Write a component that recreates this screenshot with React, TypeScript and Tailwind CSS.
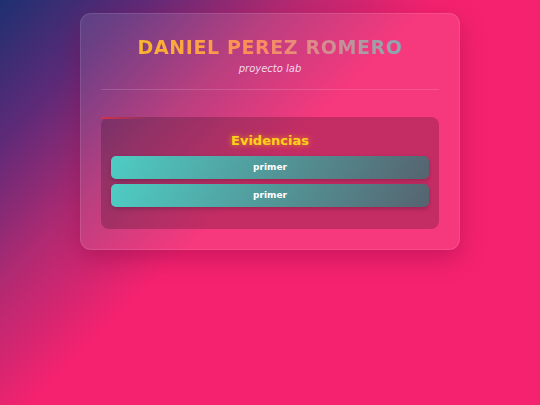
import React from "react";

export default function App() {
  return (
    <div
      className="min-h-[405px] w-full bg-[linear-gradient(135deg,#1e3070_0%,#5e2a78_15%,#b02a72_30%,#f5226f_46%,#f5226f_100%)] pt-[13px]"
      style={{ fontFamily: '"DejaVu Sans", Verdana, sans-serif' }}
    >
      <div className="mx-auto w-[380px] rounded-[11px] border border-white/10 bg-white/10 px-[20px] pb-[20px] pt-[20px] shadow-[0_8px_24px_rgba(120,0,60,0.35)]">
        <div className="flex flex-col items-center">
          <h1 className="bg-[linear-gradient(90deg,#fbb62e_0%,#fd8c5c_45%,#d88b90_70%,#86a9b3_100%)] bg-clip-text text-[19px] font-bold leading-[26px] tracking-[0.6px] text-transparent">
            DANIEL PEREZ ROMERO
          </h1>
          <p className="mt-[2px] text-[10px] italic leading-[14px] text-[#f4d6ec]">
            proyecto lab
          </p>
        </div>
        <div className="mt-[13px] h-px w-full bg-white/15" />
        <div className="relative mt-[27px] rounded-[8px] bg-black/20 px-[10px] pb-[22px] pt-[15px]">
          <div className="absolute left-0 top-0 h-[2px] w-[50px] rounded-tl-[8px] bg-[linear-gradient(90deg,#d8304a,rgba(216,48,74,0))]" />
          <h2 className="text-center text-[13px] font-bold leading-[18px] text-[#ffd21a] [text-shadow:0_0_6px_rgba(255,170,0,0.8)]">
            Evidencias
          </h2>
          <div className="mt-[6px] flex flex-col gap-[5px]">
            {["primer", "primer"].map((t, i) => (
              <button
                key={i}
                className="flex h-[23px] w-full items-center justify-center rounded-[5px] bg-[linear-gradient(120deg,#4ecdc4_0%,#56636f_100%)] text-[9px] font-bold text-white shadow-[0_2px_4px_rgba(0,0,0,0.2)]"
              >
                {t}
              </button>
            ))}
          </div>
        </div>
      </div>
    </div>
  );
}
